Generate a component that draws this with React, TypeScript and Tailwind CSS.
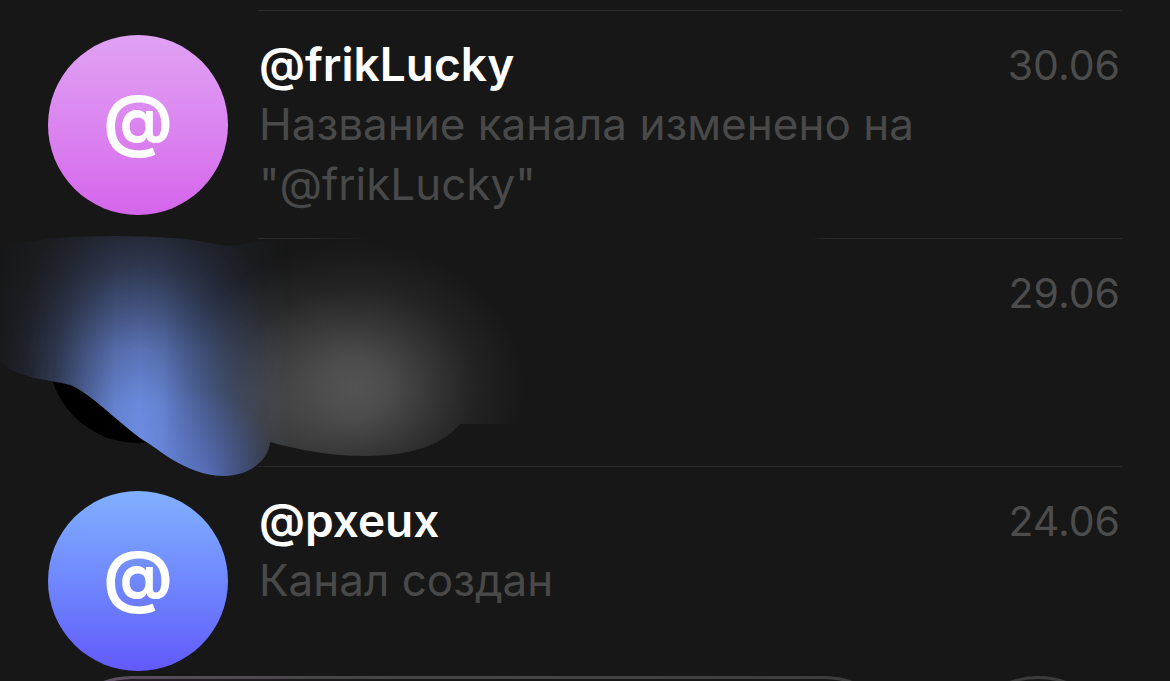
import clsx from "clsx";

const channels = [
  {
    id: 1,
    name: "@frikLucky",
    message: 'Название канала изменено на "@frikLucky"',
    date: "30.06",
    avatar: "bg-linear-to-b from-[#e0a2f3] to-[#d565ec]",
    divider: "bg-[#2b2b2b]",
  },
  {
    id: 2,
    name: "",
    message: "",
    date: "29.06",
    avatar: "bg-black",
    divider:
      "bg-[linear-gradient(to_right,#2b2b2b_5%,transparent_13%,transparent_64%,#2b2b2b_66%)]",
  },
  {
    id: 3,
    name: "@pxeux",
    message: "Канал создан",
    date: "24.06",
    avatar: "bg-linear-to-b from-[#81b0ff] to-[#6259fa]",
    divider: "bg-[#2b2b2b]",
  },
];

// Painted-over area that hides the second channel
function Smudge() {
  return (
    <svg
      className="absolute top-0 left-0"
      width="540"
      height="250"
      viewBox="0 230 540 250"
      aria-hidden="true"
    >
      <defs>
        <clipPath id="smudge-shape">
          <path d="M0 246C30 240 65 236 110 236C150 236 190 238 210 243C225 247 238 246 258 241L540 241V424H460C447 440 420 456 365 456C330 456 300 450 270 442C269 458 252 476 223 476C185 475 158 448 143 440C120 424 88 391 70 385C50 379 20 380 0 362Z" />
        </clipPath>
        <linearGradient id="smudge-x" x1="0" x2="290" y1="0" y2="0" gradientUnits="userSpaceOnUse">
          <stop offset="0" stopColor="#6f90e8" stopOpacity="0.03" />
          <stop offset="0.1" stopColor="#6f90e8" stopOpacity="0.14" />
          <stop offset="0.2" stopColor="#6f90e8" stopOpacity="0.36" />
          <stop offset="0.3" stopColor="#6f90e8" stopOpacity="0.66" />
          <stop offset="0.4" stopColor="#6f90e8" stopOpacity="0.93" />
          <stop offset="0.48" stopColor="#6f90e8" stopOpacity="1" />
          <stop offset="0.56" stopColor="#6f90e8" stopOpacity="0.93" />
          <stop offset="0.68" stopColor="#6688dc" stopOpacity="0.65" />
          <stop offset="0.8" stopColor="#5f80d0" stopOpacity="0.34" />
          <stop offset="0.9" stopColor="#5f80d0" stopOpacity="0.12" />
          <stop offset="1" stopColor="#5f80d0" stopOpacity="0" />
        </linearGradient>
        <linearGradient id="smudge-y" x1="0" x2="0" y1="236" y2="476" gradientUnits="userSpaceOnUse">
          <stop offset="0" stopColor="#fff" stopOpacity="0.16" />
          <stop offset="0.15" stopColor="#fff" stopOpacity="0.3" />
          <stop offset="0.3" stopColor="#fff" stopOpacity="0.5" />
          <stop offset="0.48" stopColor="#fff" stopOpacity="0.76" />
          <stop offset="0.7" stopColor="#fff" stopOpacity="0.95" />
          <stop offset="1" stopColor="#fff" stopOpacity="1" />
        </linearGradient>
        <mask id="smudge-fade" maskUnits="userSpaceOnUse" x="0" y="230" width="540" height="250">
          <rect y="230" width="540" height="250" fill="url(#smudge-y)" />
        </mask>
        <radialGradient id="smudge-gray">
          <stop offset="0" stopColor="#535353" />
          <stop offset="0.2" stopColor="#535353" stopOpacity="0.88" />
          <stop offset="0.45" stopColor="#535353" stopOpacity="0.52" />
          <stop offset="0.7" stopColor="#535353" stopOpacity="0.2" />
          <stop offset="1" stopColor="#535353" stopOpacity="0" />
        </radialGradient>
        <radialGradient id="smudge-tail">
          <stop offset="0" stopColor="#6680e0" stopOpacity="0.6" />
          <stop offset="0.5" stopColor="#6680e0" stopOpacity="0.28" />
          <stop offset="1" stopColor="#6680e0" stopOpacity="0" />
        </radialGradient>
      </defs>
      <g clipPath="url(#smudge-shape)">
        <rect y="230" width="540" height="250" fill="#171717" />
        <ellipse cx="355" cy="388" rx="170" ry="145" fill="url(#smudge-gray)" />
        <ellipse cx="275" cy="405" rx="110" ry="135" fill="url(#smudge-gray)" opacity="0.45" />
        <rect y="230" width="290" height="250" fill="url(#smudge-x)" mask="url(#smudge-fade)" />
        <ellipse cx="200" cy="480" rx="80" ry="90" fill="url(#smudge-tail)" />
      </g>
    </svg>
  );
}

export default function App() {
  return (
    <main className="relative h-screen overflow-hidden bg-[#171717] pt-[10px] font-['Inter',sans-serif]">
      {/* Channel list */}
      <ul>
        {channels.map((channel) => (
          <li key={channel.id} className="relative flex h-[228px] gap-[30px] px-12">
            <div
              className={clsx(
                "mt-[25px] flex size-[180px] shrink-0 items-center justify-center rounded-full pb-3",
                channel.avatar
              )}
            >
              {channel.name && (
                <span className="text-[68px] leading-[68px] font-bold text-white">@</span>
              )}
            </div>

            <div className="min-w-0 flex-1">
              <div className={clsx("h-px", channel.divider)} />
              <div className="flex h-[83px] items-end justify-between pr-[2px] pl-px">
                <h2 className="text-[46px] leading-[60px] font-semibold text-white">
                  {channel.name}
                </h2>
                <time className="text-[41px] leading-[58px] text-[#4c4c4c]">{channel.date}</time>
              </div>
              <p className="max-w-[720px] pl-px text-[44px] leading-[60px] text-[#494949]">
                {channel.message}
              </p>
            </div>

            {!channel.name && (
              <div className="absolute top-[-8px] left-0">
                <Smudge />
              </div>
            )}
          </li>
        ))}
      </ul>

      {/* Floating bottom bar, only its top edge is on screen */}
      <div className="absolute inset-x-12 bottom-[-163px] flex gap-[46px]">
        <div className="h-[168px] flex-1 rounded-full bg-linear-to-r from-[#65506b] via-[#484848] via-30% to-[#3c3c3c] p-[3px]">
          <div className="h-full rounded-full bg-linear-to-r from-[#2b1f2e] to-[#171717] to-40%" />
        </div>
        <div className="size-[168px] rounded-full border-[3px] border-[#3c3c3c] bg-[#171717]" />
      </div>
    </main>
  );
}
